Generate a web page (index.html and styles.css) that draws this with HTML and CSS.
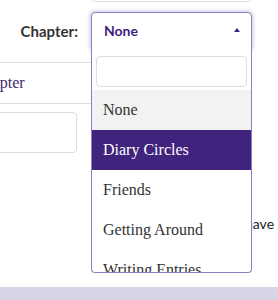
FILE: index.html
```html
<!DOCTYPE html>
<html lang="en">

<head>
  <meta charset="UTF-8">
  <meta name="viewport" content="width=device-width, initial-scale=1.0">
  <title>Diary entry</title>
  <link rel="stylesheet" href="styles.css">
</head>

<body>
  <div class="prev-field"></div>

  <div class="chapter-row">
    <label class="chapter-label">Chapter:</label>
    <div class="chosen-single">
      <span>None</span>
      <span class="caret"></span>
      <div class="chosen-drop">
        <div class="chosen-search">
          <input type="text">
        </div>
        <ul class="chosen-results">
          <li class="result-selected">None</li>
          <li class="highlighted">Diary Circles</li>
          <li>Friends</li>
          <li>Getting Around</li>
          <li>Writing Entries</li>
          <li>Other</li>
        </ul>
      </div>
    </div>
  </div>

  <div class="tabs">
    <a class="tab-link">Chapter</a>
  </div>

  <div class="side-input"></div>

  <p class="hint">have a look</p>

  <div class="footer-band"></div>
</body>

</html>
```

FILE: styles.css
```css
body {
  margin: 0;
  font-family: Lato, 'Open Sans', sans-serif;
  color: #222;
  background-color: #fff;
  overflow: hidden;
}

.prev-field {
  margin: -30px 0 0 91px;
  width: 159px;
  height: 30px;
  border: 1px solid #ddd;
  border-radius: 4px;
}

.chapter-row {
  display: flex;
  align-items: center;
  margin-top: 10px;
}

.chapter-label {
  width: 78px;
  padding-right: 13px;
  text-align: right;
  font-size: 15px;
  font-weight: 700;
  color: #333;
}

.chosen-single {
  position: relative;
  box-sizing: border-box;
  width: 161px;
  height: 38px;
  padding: 0 11px 2px 12px;
  display: flex;
  align-items: center;
  justify-content: space-between;
  border: 1px solid #8e7dc2;
  border-radius: 4px 4px 0 0;
  box-shadow: 0 0 5px rgba(94, 64, 160, 0.45);
  background-color: #fff;
  color: #3f2382;
  font-size: 14px;
  font-weight: 700;
}

.caret {
  width: 0;
  height: 0;
  border-left: 3.5px solid transparent;
  border-right: 3.5px solid transparent;
  border-bottom: 4px solid #3f2382;
}

.chosen-drop {
  position: absolute;
  top: 100%;
  left: -1px;
  right: -1px;
  border: 1px solid #8e7dc2;
  border-top: 0;
  border-radius: 0 0 4px 4px;
  background-color: #fff;
  z-index: 10;
}

.chosen-search {
  padding: 7px 4px 3px 4px;
}

.chosen-search input {
  box-sizing: border-box;
  display: block;
  width: 100%;
  height: 31px;
  border: 1px solid #ddd;
  border-radius: 4px;
}

.chosen-results {
  list-style: none;
  margin: 0;
  padding: 0;
  max-height: 182px;
  overflow: hidden;
  font-family: 'Liberation Serif', serif;
  font-size: 16px;
  font-weight: 400;
  color: #333;
}

.chosen-results li {
  height: 40px;
  line-height: 40px;
  padding: 0 11px;
}

.chosen-results .result-selected {
  background-color: #f2f2f2;
}

.chosen-results .highlighted {
  background-color: #40237d;
  color: #fff;
}

.tabs {
  width: 200px;
  height: 40px;
  margin-top: 12px;
  border-top: 1px solid #ddd;
  border-bottom: 1px solid #ddd;
  display: flex;
  align-items: center;
}

.tab-link {
  margin-left: -26px;
  font-family: 'Liberation Serif', serif;
  font-size: 16px;
  color: #3e2a70;
}

.side-input {
  width: 95px;
  height: 39px;
  margin: 8px 0 0 -20px;
  border: 1px solid #ddd;
  border-radius: 4px;
}

.hint {
  margin: 61px 0 0 245px;
  font-size: 14px;
  line-height: 20px;
  white-space: nowrap;
  color: #222;
}

.footer-band {
  height: 20px;
  margin-top: 53px;
  background-color: #d6d4e5;
}
```
